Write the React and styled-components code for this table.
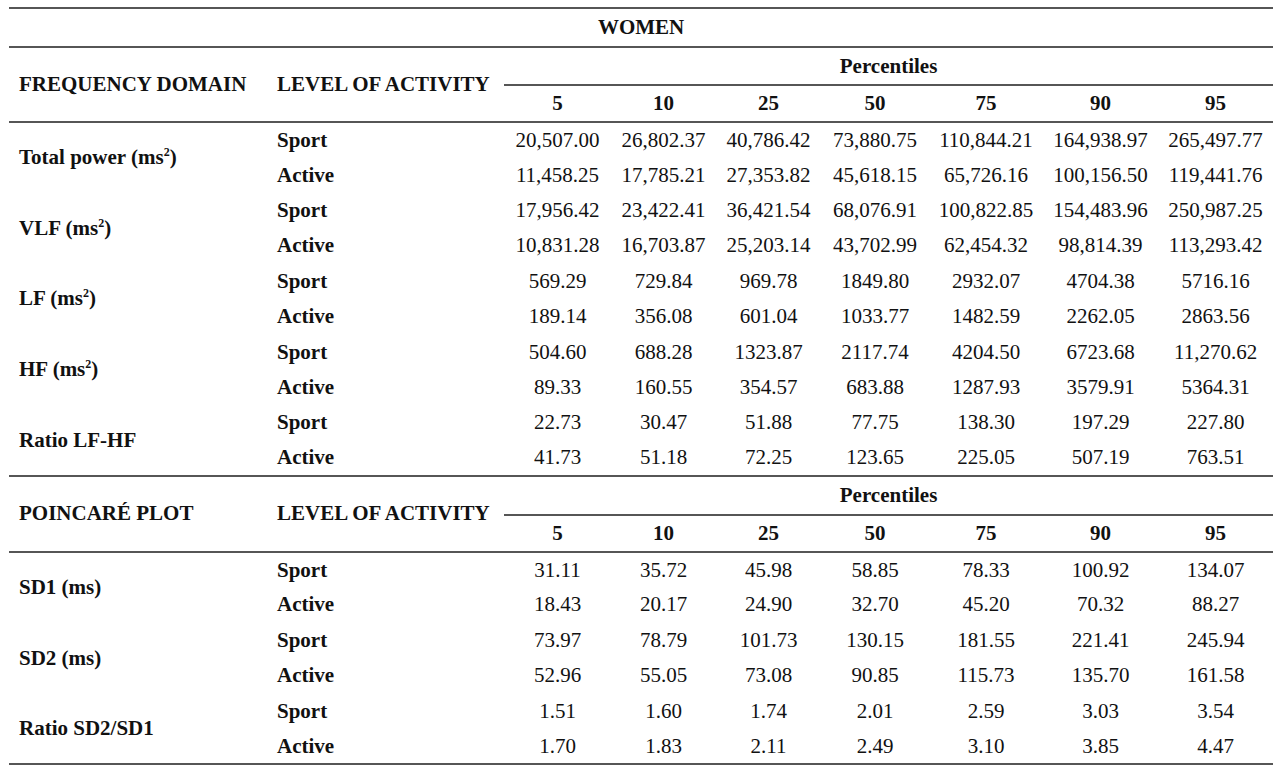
import React from "react";
import styled, { createGlobalStyle } from "styled-components";

const Global = createGlobalStyle`
  html, body { margin: 0; padding: 0; background: #ffffff; }
  body { font-family: "Liberation Serif", "Times New Roman", serif; color: #111; }
`;

const RULE = "2px solid #565656";

const Table = styled.table`
  margin: 7px 0 0 9px;
  width: 1264px;
  table-layout: fixed;
  border-collapse: collapse;
  border-top: ${RULE};
  font-family: "Liberation Serif", "Times New Roman", serif;
  font-size: 21px;
  color: #111;
`;

const Group = styled.tbody`
  border-bottom: ${RULE};
`;

const Row = styled.tr`
  height: ${(p) => p.$h}px;
`;

const TitleCell = styled.th`
  text-align: center;
  font-weight: bold;
  padding: 0;
  vertical-align: middle;
`;

const HeadLabel = styled.th`
  text-align: left;
  font-weight: bold;
  padding: 0 0 0 10px;
  vertical-align: middle;
  white-space: nowrap;
`;

const SpanHead = styled.th`
  text-align: center;
  font-weight: bold;
  padding: 0;
  vertical-align: middle;
  border-bottom: ${RULE};
`;

const NumHead = styled.th`
  text-align: center;
  font-weight: bold;
  padding: 0;
  vertical-align: middle;
`;

const Label = styled.th`
  text-align: left;
  font-weight: bold;
  padding: 0 0 0 10px;
  vertical-align: middle;
  white-space: nowrap;
`;

const Level = styled.td`
  text-align: left;
  font-weight: bold;
  padding: 0 0 0 10px;
  vertical-align: middle;
`;

const Value = styled.td`
  text-align: center;
  padding: 0;
  vertical-align: middle;
  white-space: nowrap;
`;

const Sup = styled.sup`
  font-size: 12px;
  line-height: 0;
  vertical-align: 8px;
`;

const widths = [258, 237, 107, 105, 105, 108, 114, 115, 115];
const pcts = ["5", "10", "25", "50", "75", "90", "95"];

const freq = [
  {
    label: <>Total power (ms<Sup>2</Sup>)</>,
    sport: ["20,507.00", "26,802.37", "40,786.42", "73,880.75", "110,844.21", "164,938.97", "265,497.77"],
    active: ["11,458.25", "17,785.21", "27,353.82", "45,618.15", "65,726.16", "100,156.50", "119,441.76"],
  },
  {
    label: <>VLF (ms<Sup>2</Sup>)</>,
    sport: ["17,956.42", "23,422.41", "36,421.54", "68,076.91", "100,822.85", "154,483.96", "250,987.25"],
    active: ["10,831.28", "16,703.87", "25,203.14", "43,702.99", "62,454.32", "98,814.39", "113,293.42"],
  },
  {
    label: <>LF (ms<Sup>2</Sup>)</>,
    sport: ["569.29", "729.84", "969.78", "1849.80", "2932.07", "4704.38", "5716.16"],
    active: ["189.14", "356.08", "601.04", "1033.77", "1482.59", "2262.05", "2863.56"],
  },
  {
    label: <>HF (ms<Sup>2</Sup>)</>,
    sport: ["504.60", "688.28", "1323.87", "2117.74", "4204.50", "6723.68", "11,270.62"],
    active: ["89.33", "160.55", "354.57", "683.88", "1287.93", "3579.91", "5364.31"],
  },
  {
    label: <>Ratio LF-HF</>,
    sport: ["22.73", "30.47", "51.88", "77.75", "138.30", "197.29", "227.80"],
    active: ["41.73", "51.18", "72.25", "123.65", "225.05", "507.19", "763.51"],
  },
];

const poincare = [
  {
    label: <>SD1 (ms)</>,
    sport: ["31.11", "35.72", "45.98", "58.85", "78.33", "100.92", "134.07"],
    active: ["18.43", "20.17", "24.90", "32.70", "45.20", "70.32", "88.27"],
  },
  {
    label: <>SD2 (ms)</>,
    sport: ["73.97", "78.79", "101.73", "130.15", "181.55", "221.41", "245.94"],
    active: ["52.96", "55.05", "73.08", "90.85", "115.73", "135.70", "161.58"],
  },
  {
    label: <>Ratio SD2/SD1</>,
    sport: ["1.51", "1.60", "1.74", "2.01", "2.59", "3.03", "3.54"],
    active: ["1.70", "1.83", "2.11", "2.49", "3.10", "3.85", "4.47"],
  },
];

function SectionHead({ title, h1, h2 }) {
  return (
    <Group>
      <Row $h={h1}>
        <HeadLabel rowSpan={2}>{title}</HeadLabel>
        <HeadLabel rowSpan={2}>LEVEL OF ACTIVITY</HeadLabel>
        <SpanHead colSpan={7}>Percentiles</SpanHead>
      </Row>
      <Row $h={h2}>
        {pcts.map((p) => (
          <NumHead key={p}>{p}</NumHead>
        ))}
      </Row>
    </Group>
  );
}

function DataGroup({ rows, h }) {
  return (
    <Group>
      {rows.map((r, i) => (
        <React.Fragment key={i}>
          <Row $h={h}>
            <Label rowSpan={2}>{r.label}</Label>
            <Level>Sport</Level>
            {r.sport.map((v, j) => (
              <Value key={j}>{v}</Value>
            ))}
          </Row>
          <Row $h={h}>
            <Level>Active</Level>
            {r.active.map((v, j) => (
              <Value key={j}>{v}</Value>
            ))}
          </Row>
        </React.Fragment>
      ))}
    </Group>
  );
}

export default function App() {
  return (
    <>
      <Global />
      <Table>
        <colgroup>
          {widths.map((w, i) => (
            <col key={i} style={{ width: w }} />
          ))}
        </colgroup>
        <Group>
          <Row $h={39}>
            <TitleCell colSpan={9}>WOMEN</TitleCell>
          </Row>
        </Group>
        <SectionHead title="FREQUENCY DOMAIN" h1={38} h2={37} />
        <DataGroup rows={freq} h={35.4} />
        <SectionHead title="POINCARÉ PLOT" h1={39} h2={37} />
        <DataGroup rows={poincare} h={35.4} />
      </Table>
    </>
  );
}
